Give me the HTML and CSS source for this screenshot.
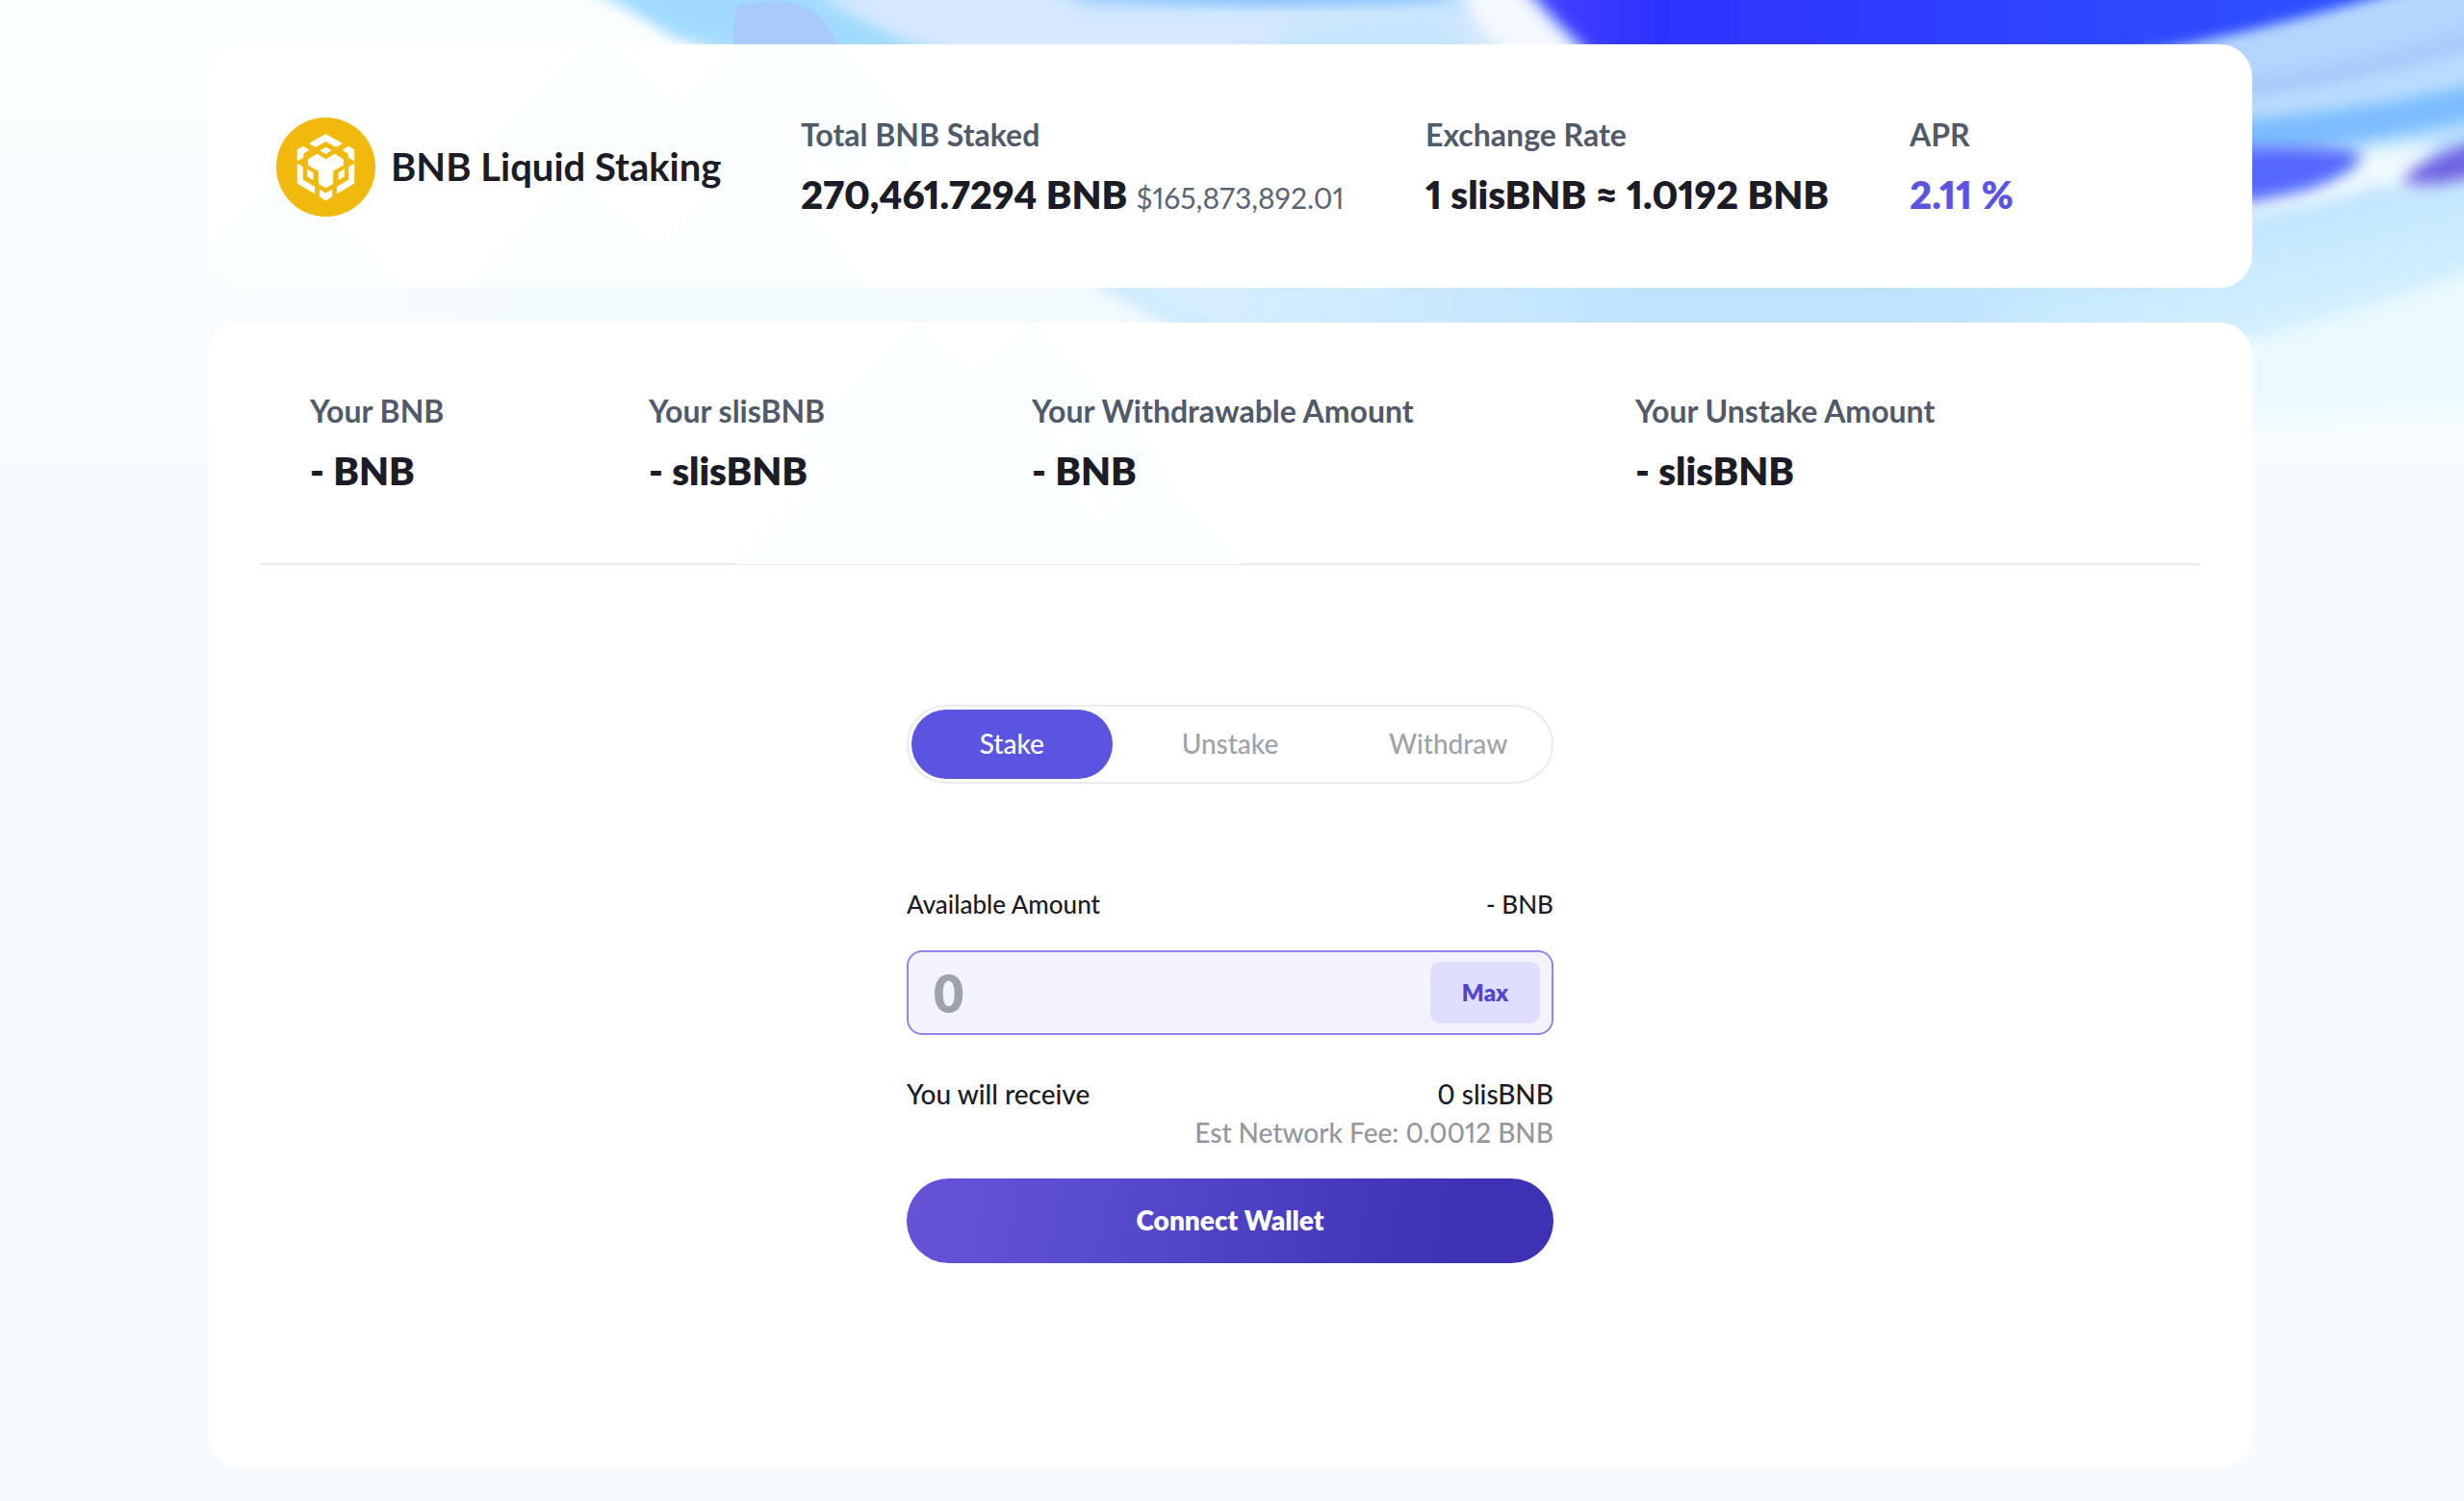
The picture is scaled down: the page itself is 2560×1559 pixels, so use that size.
FILE: index.html
```html
<!DOCTYPE html>
<html lang="en">
<head>
  <meta charset="utf-8">
  <title>BNB Liquid Staking</title>
  <link rel="stylesheet" href="styles.css">
</head>
<body>
  <svg class="backdrop" viewBox="0 0 2560 480" preserveAspectRatio="xMaxYMin slice" aria-hidden="true">
    <defs>
      <filter id="soft" x="-20%" y="-40%" width="140%" height="180%"><feGaussianBlur stdDeviation="8"/></filter>
      <filter id="softer" x="-20%" y="-40%" width="140%" height="180%"><feGaussianBlur stdDeviation="16"/></filter>
      <linearGradient id="base" x1="0" y1="0" x2="0" y2="1">
        <stop offset="0" stop-color="#fbfeff"/>
        <stop offset="1" stop-color="#f7fcff"/>
      </linearGradient>
      <linearGradient id="gap" x1="0" y1="0" x2="1" y2="0">
        <stop offset="0" stop-color="#f4fbff" stop-opacity="0"/>
        <stop offset="0.3" stop-color="#f4fbff"/>
      </linearGradient>
      <linearGradient id="wave" gradientUnits="userSpaceOnUse" x1="2200" y1="200" x2="2240" y2="370">
        <stop offset="0" stop-color="#b9e0ff"/>
        <stop offset="1" stop-color="#d3f0ff"/>
      </linearGradient>
      <linearGradient id="inner" gradientUnits="userSpaceOnUse" x1="1200" y1="0" x2="1700" y2="0">
        <stop offset="0" stop-color="#d8efff"/>
        <stop offset="1" stop-color="#c0e4ff"/>
      </linearGradient>
      <linearGradient id="deep" x1="0" y1="0" x2="1" y2="0">
        <stop offset="0" stop-color="#4a40ff"/>
        <stop offset="0.15" stop-color="#2d33ff"/>
        <stop offset="1" stop-color="#2e55ff"/>
      </linearGradient>
    </defs>
    <rect width="2560" height="480" fill="url(#base)"/>
    <rect x="240" y="299" width="1000" height="40" fill="url(#gap)"/>
    <path d="M2200 330L2620 260V420Q2450 440 2200 440Z" fill="#ebfaff" filter="url(#softer)"/>
    <path d="M612 -30L700 36L900 120Q1140 330 1400 400Q1900 430 2340 352Q2470 320 2620 262V-30Z" fill="url(#wave)" filter="url(#soft)"/>
    <path d="M1120 260Q1220 370 1420 390H1900L2100 320L1900 250Z" fill="url(#inner)" filter="url(#softer)"/>
    <path d="M600 -20L700 34L860 70H1040L850 -30Z" fill="#a0dbff" filter="url(#soft)"/>
    <path d="M766 6Q830 -8 852 18Q870 34 872 60H764Q758 30 766 6Z" fill="#a9cbfb"/>
    <path d="M845 -10Q930 50 1060 80H1620L1540 -20V10H1120V-10Z" fill="#d6e8ff" filter="url(#soft)"/>
    <path d="M1320 30L1500 0L1540 90H1340Z" fill="#c5e6fd" filter="url(#softer)"/>
    <path d="M1100 -16H1500V-2Q1280 10 1100 -8Z" fill="#7fb6fa" filter="url(#soft)"/>
    <path d="M1516 -20H1576Q1610 20 1670 80H1600Q1530 40 1516 -20Z" fill="#f4f8ff" filter="url(#soft)"/>
    <path d="M1574 -30Q1610 20 1690 90H2080Q2320 50 2560 -30Z" fill="url(#deep)" filter="url(#soft)"/>
    <path d="M2180 66Q2360 36 2580 -20V60Q2440 110 2300 110Z" fill="#b3d5fe" filter="url(#soft)"/>
    <path d="M2300 96Q2460 76 2600 30" fill="none" stroke="#a9c6f8" stroke-width="16" filter="url(#soft)"/>
    <path d="M2340 118Q2470 100 2600 60" fill="none" stroke="#bcdcff" stroke-width="18" filter="url(#soft)"/>
    <path d="M2280 145Q2460 136 2620 94" fill="none" stroke="#7cbcff" stroke-width="36" filter="url(#soft)"/>
    <path d="M2300 228Q2430 210 2462 194L2520 192L2530 150L2460 156Q2450 190 2300 208Z" fill="#f0faff" filter="url(#soft)"/>
    <path d="M2240 158Q2400 148 2448 158Q2462 172 2400 196Q2330 214 2240 220Z" fill="#5468ff" filter="url(#soft)"/>
    <path d="M2496 190Q2504 166 2600 138V176Q2530 196 2496 190Z" fill="#6e62e2" filter="url(#soft)"/>
  </svg>

  <main class="page">
    <section class="card summary">
      <svg class="watermark" width="740" height="253" viewBox="216 46 740 253" aria-hidden="true">
        <path d="M216 257L298 176L420 299H216Z"/>
        <path d="M607 46L506 147L556 190L596 188L487 299H906L833 212L842 158L873 185L910 154L940 183L950 130L870 46H769L704 112L637 46Z"/>
        <path class="cut" d="M612 194L682 257L748 194Z"/>
      </svg>
      <div class="brand">
        <svg class="brand-icon" viewBox="51 53 308 308" aria-hidden="true">
          <circle cx="205" cy="207" r="154" fill="#f0b90b"/>
          <g fill="#fff">
            <path d="M205 104L257 134L237 146L205 128L173 146L153 134Z"/>
            <path d="M205 145L223 156L205 167L187 156Z"/>
            <path d="M178 166L205 182L232 166L260 182V202L228 220V259L205 272L182 259V220L150 202V182Z"/>
            <path d="M134 142L154 154L136 165V177L116 189V153Z"/>
            <path d="M276 142L256 154L274 165V177L294 189V153Z"/>
            <path d="M116 195L134 206V246L171 268V291L116 258Z"/>
            <path d="M294 195L276 206V246L239 268V291L294 258Z"/>
            <path d="M147 213L166 224V247L147 236Z"/>
            <path d="M263 213L244 224V247L263 236Z"/>
            <path d="M185 276L205 288L225 276V299L205 312L185 299Z"/>
          </g>
        </svg>
        <h1>BNB Liquid Staking</h1>
      </div>
      <div class="stat">
        <span class="label">Total BNB Staked</span>
        <span class="value">270,461.7294 BNB <small>$165,873,892.01</small></span>
      </div>
      <div class="stat">
        <span class="label">Exchange Rate</span>
        <span class="value">1 slisBNB ≈ 1.0192 BNB</span>
      </div>
      <div class="stat">
        <span class="label">APR</span>
        <span class="value apr">2.11 %</span>
      </div>
    </section>

    <section class="card staking">
      <svg class="watermark second" width="540" height="251" viewBox="760 335 540 251" aria-hidden="true">
        <path d="M951 335L831 455L860 491L765 586H1289L1080 378L1069 335L1011 391Z"/>
        <path d="M1069 335L1011 391L1070 450L1110 470L1133 443L1189 503L1225 522L1189 455Z"/>
        <path class="cut" d="M1080 443L1110 470L1133 443Z"/>
        <path class="cut" d="M1080 482L1143 545L1189 500L1133 443Z"/>
        <path d="M1133 443L1110 470L1143 520L1189 500Z"/>
      </svg>
      <div class="balances">
        <div class="stat">
          <span class="label">Your BNB</span>
          <span class="value">- BNB</span>
        </div>
        <div class="stat">
          <span class="label">Your slisBNB</span>
          <span class="value">- slisBNB</span>
        </div>
        <div class="stat">
          <span class="label">Your Withdrawable Amount</span>
          <span class="value">- BNB</span>
        </div>
        <div class="stat">
          <span class="label">Your Unstake Amount</span>
          <span class="value">- slisBNB</span>
        </div>
      </div>

      <form class="stake-form">
        <div class="tabs">
          <button type="button" class="tab active">Stake</button>
          <button type="button" class="tab">Unstake</button>
          <button type="button" class="tab">Withdraw</button>
        </div>
        <div class="row available">
          <label for="amount">Available Amount</label>
          <span>- BNB</span>
        </div>
        <div class="amount-box">
          <input type="text" id="amount" inputmode="decimal" placeholder="0">
          <button type="button" class="max">Max</button>
        </div>
        <div class="row receive">
          <span>You will receive</span>
          <span>0 slisBNB</span>
        </div>
        <p class="fee">Est Network Fee: 0.0012 BNB</p>
        <button type="button" class="connect">Connect Wallet</button>
      </form>
    </section>
  </main>
</body>
</html>
```
FILE: styles.css
```css
* {
  margin: 0;
  padding: 0;
  box-sizing: border-box;
}

body {
  font-family: Lato, "Open Sans", sans-serif;
  font-variant-numeric: proportional-nums;
  color: #1b1c26;
  background: #f5fbff;
  position: relative;
  min-height: 100vh;
}

button,
input {
  font: inherit;
  border: none;
}

button {
  cursor: pointer;
}

.backdrop {
  position: absolute;
  top: 0;
  left: 0;
  width: 100%;
  height: 480px;
  z-index: -1;
}

.page {
  display: flex;
  flex-direction: column;
  gap: 36px;
  padding: 46px 220px 32px 216px;
}

.card {
  position: relative;
  overflow: hidden;
  background: #fff;
  border-radius: 34px;
}

.watermark {
  position: absolute;
  top: 0;
  left: 0;
  fill: #fafeff;
}

.watermark.second {
  left: 544px;
}

.watermark .cut {
  fill: #fff;
}

.summary {
  display: grid;
  grid-template-columns: 545fr 649fr 503fr 356fr;
  align-items: center;
  padding: 72px 0 71px 71px;
}

.brand {
  position: relative;
  display: flex;
  align-items: center;
  gap: 16px;
}

.brand-icon {
  width: 103px;
  height: 103px;
}

h1 {
  font-size: 40px;
  line-height: 48px;
  font-weight: 700;
  white-space: nowrap;
}

.stat {
  position: relative;
  display: flex;
  flex-direction: column;
  gap: 14px;
  white-space: nowrap;
}

.label {
  font-size: 32px;
  line-height: 44px;
  font-weight: 700;
  color: #505a69;
}

.value {
  font-size: 40px;
  line-height: 52px;
  font-weight: 800;
}

.value small {
  font-size: 30px;
  line-height: 1;
  font-weight: 400;
  color: #5b6573;
}

.apr {
  color: #5b54e0;
}

.balances {
  display: grid;
  grid-template-columns: 352fr 398fr 627fr 587fr;
  margin: 0 54px;
  padding: 70px 0 70px 52px;
  border-bottom: 2px solid #ebebed;
}

.stake-form {
  max-width: 672px;
  margin: 0 auto;
  padding: 145px 0 213px;
  font-size: 28px;
  font-weight: 500;
}

.tabs {
  display: grid;
  grid-template-columns: repeat(3, 1fr);
  gap: 18px;
  height: 82px;
  padding: 3px;
  border: 2px solid #ebebed;
  border-radius: 41px;
}

.tab {
  padding-bottom: 2px;
  border-radius: 36px;
  background: none;
  color: #9ea2a9;
}

.tab.active {
  background: #5b54e0;
  color: #fff;
}

.row {
  display: flex;
  justify-content: space-between;
}

.available {
  margin-top: 109px;
  font-size: 26px;
  line-height: 32px;
}

.amount-box {
  display: flex;
  align-items: center;
  height: 88px;
  margin-top: 32px;
  padding: 0 12px 0 26px;
  border: 2px solid #8f88e8;
  border-radius: 16px;
  background: #f3f2ff;
}

.amount-box input {
  flex: 1;
  min-width: 0;
  background: none;
  outline: none;
  font-size: 54px;
  font-weight: 800;
  font-variant-numeric: tabular-nums;
  color: #1b1c26;
}

.amount-box input::placeholder {
  color: #9ea2a9;
}

.max {
  width: 114px;
  height: 64px;
  padding-bottom: 2px;
  border-radius: 10px;
  background: #e0deff;
  color: #5046ca;
  font-size: 24px;
  font-weight: 800;
}

.receive {
  margin-top: 41px;
  line-height: 40px;
}

.fee {
  text-align: right;
  line-height: 40px;
  color: #9297a0;
}

.connect {
  width: 100%;
  height: 88px;
  margin-top: 28px;
  padding-bottom: 2px;
  border-radius: 44px;
  background: linear-gradient(100deg, #6654d8, #5b4dd0 25%, #3d32b3 85%);
  color: #fff;
  font-weight: 800;
}
```
